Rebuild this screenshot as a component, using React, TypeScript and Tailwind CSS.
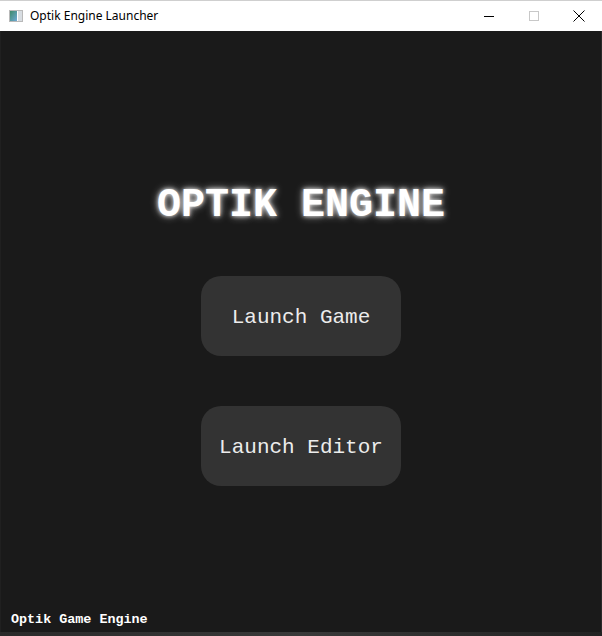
import React from "react";

export default function App() {
  const mono = { fontFamily: '"Courier New", "Nimbus Mono PS", "Nimbus Mono L", Courier, "Liberation Mono", monospace' };
  return (
    <div className="w-[602px] h-[636px] flex flex-col bg-[#1a1a1a] overflow-hidden">
      {/* Title bar */}
      <div className="h-[31px] flex items-center bg-white border-t border-[#cfcfcf] shrink-0" style={{ fontFamily: '"Segoe UI", "Noto Sans", "Liberation Sans", sans-serif' }}>
        <div className="ml-[9px] w-[14px] h-[12px] flex border border-[#b9b9b9] bg-[#eef1f3]">
          <div className="w-[7px] h-full bg-gradient-to-br from-[#3f8a6a] to-[#6fa8d6]" />
          <div className="w-[1px] h-full bg-white" />
          <div className="flex-1 h-full bg-[#d8dde2]" />
        </div>
        <span className="ml-[7px] text-[12px] text-black leading-none">Optik Engine Launcher</span>
        <div className="ml-auto flex h-full">
          <div className="w-[45px] h-full flex items-center justify-center">
            <div className="w-[10px] h-[1px] bg-black" />
          </div>
          <div className="w-[45px] h-full flex items-center justify-center">
            <div className="w-[10px] h-[10px] border border-[#c8c8c8]" />
          </div>
          <div className="w-[46px] h-full flex items-center justify-center">
            <svg width="12" height="12" viewBox="0 0 12 12">
              <path d="M0.5 0.5 L11.5 11.5 M11.5 0.5 L0.5 11.5" stroke="#000" strokeWidth="1" />
            </svg>
          </div>
        </div>
      </div>
      {/* Content */}
      <div className="h-[601px] flex flex-col items-center bg-[#1a1a1a] border-l border-[#202020] border-r border-r-[#2a2a2a]" style={mono}>
        <div
          className="mt-[155px] h-[40px] leading-[40px] text-[40px] font-bold text-white"
          style={{ textShadow: "0 0 4px rgba(255,255,255,0.9), 0 0 8px rgba(255,255,255,0.6)" }}
        >
          OPTIK ENGINE
        </div>
        <button className="mt-[50px] w-[200px] h-[80px] pt-[3px] rounded-[20px] bg-[#333333] text-[21px] text-[#ececec] flex items-center justify-center" style={mono}>
          Launch Game
        </button>
        <button className="mt-[50px] w-[200px] h-[80px] pt-[3px] rounded-[20px] bg-[#333333] text-[21px] text-[#ececec] flex items-center justify-center" style={mono}>
          Launch Editor
        </button>
        <div className="mt-auto mb-[4px] self-start ml-[10px] text-[13.4px] leading-[16px] font-bold text-white">
          Optik Game Engine
        </div>
      </div>
      <div className="h-[4px] bg-gradient-to-r from-[#2a2a2a] via-[#3a3a3a] to-[#222222]" />
    </div>
  );
}
